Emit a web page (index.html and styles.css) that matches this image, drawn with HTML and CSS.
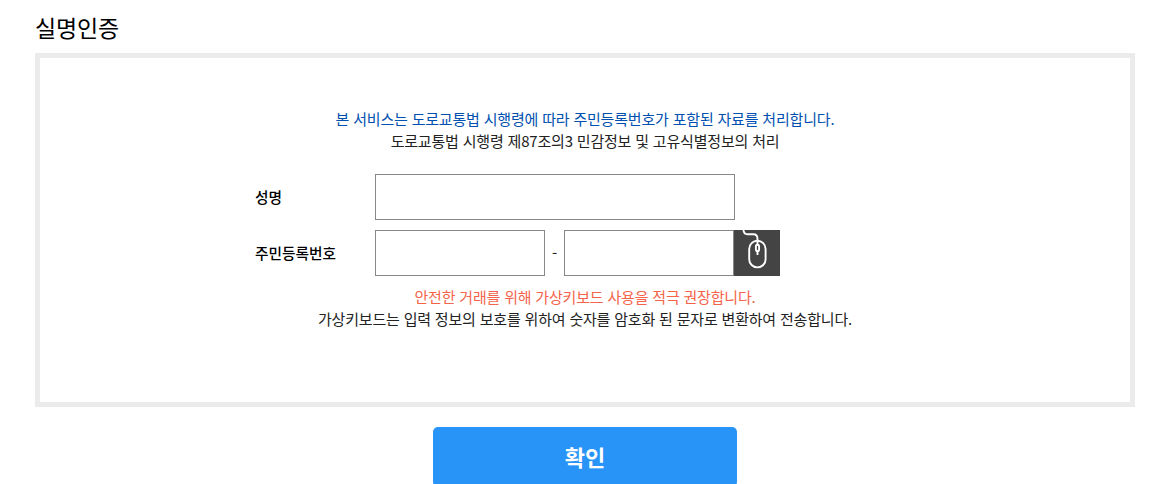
FILE: index.html
```html
<!DOCTYPE html>
<html lang="ko">

<head>
    <meta charset="UTF-8">
    <meta name="viewport" content="width=device-width, initial-scale=1.0">
    <title>실명인증</title>
    <link rel="stylesheet" href="styles.css">
</head>

<body>
    <div class="container">
        <h1>실명인증</h1>
        <form class="auth-form">
            <div class="auth-box">
                <p class="notice"><span class="blue">본 서비스는 도로교통법 시행령에 따라 주민등록번호가 포함된 자료를 처리합니다.</span><br>도로교통법 시행령 제87조의3 민감정보 및 고유식별정보의 처리</p>
                <div class="row">
                    <label for="userName">성명</label>
                    <input type="text" id="userName" class="name">
                </div>
                <div class="row">
                    <label for="jumin1">주민등록번호</label>
                    <input type="text" id="jumin1" class="jumin" maxlength="6">
                    <span class="dash">-</span>
                    <input type="password" id="jumin2" class="jumin" maxlength="7">
                    <button type="button" class="keypad" aria-label="가상키보드">
                        <svg width="46" height="46" viewBox="0 0 46 46" fill="none" stroke="#fff" stroke-width="1.9">
                            <path d="M9.5 0 C9.7 3 10.7 4.3 13.5 4.3 H19.5 C22.5 4.3 23.5 6 23.5 9 V14.5" />
                            <rect x="15.2" y="10.8" width="16.4" height="26.6" rx="8.2" />
                            <rect x="21.9" y="14.8" width="3.2" height="6.4" rx="1.6" />
                            <path d="M23.5 21 V25" />
                        </svg>
                    </button>
                </div>
                <p class="notice bottom"><span class="red">안전한 거래를 위해 가상키보드 사용을 적극 권장합니다.</span><br>가상키보드는 입력 정보의 보호를 위하여 숫자를 암호화 된 문자로 변환하여 전송합니다.</p>
            </div>
            <button type="submit" class="submit">확인</button>
        </form>
    </div>
</body>

</html>
```

FILE: styles.css
```css
* {
    box-sizing: border-box;
}

body {
    margin: 0;
    font-family: "Noto Sans CJK KR", sans-serif;
    font-size: 15px;
    letter-spacing: -0.19px;
    color: #222;
    background-color: #fff;
    overflow: hidden;
}

.container {
    width: 1100px;
    margin-left: 35px;
}

h1 {
    margin: 0;
    padding-top: 11px;
    height: 53px;
    font-size: 23px;
    font-weight: 400;
    line-height: 32px;
    color: #000;
}

.auth-box {
    height: 354px;
    padding: 50px 215px 0;
    border: 5px solid #ebebeb;
}

.notice {
    margin: 0 -100px 22px;
    line-height: 22px;
    text-align: center;
}

.blue {
    color: #0050b0;
}

.red {
    color: #f4634a;
}

.row {
    display: flex;
    align-items: center;
    height: 46px;
    margin-bottom: 10px;
}

.row label {
    width: 120px;
    padding-bottom: 2px;
    font-size: 14.7px;
    letter-spacing: 0;
    font-weight: 500;
    color: #000;
}

.row input {
    height: 46px;
    border: 1px solid #888;
    padding: 0 10px;
}

.name {
    width: 360px;
}

.jumin {
    width: 170px;
}

.dash {
    width: 19px;
    padding-bottom: 2px;
    text-align: center;
}

.keypad {
    width: 46px;
    height: 46px;
    padding: 0;
    border: 0;
    background-color: #444;
}

.keypad svg {
    display: block;
}

.bottom {
    margin-bottom: 0;
}

.submit {
    display: block;
    width: 304px;
    height: 60px;
    margin: 20px auto 0;
    padding: 0 0 3px;
    border: 0;
    border-radius: 5px;
    background-color: #2894f8;
    color: #fff;
    font-family: inherit;
    font-size: 22px;
    font-weight: 700;
}
```
